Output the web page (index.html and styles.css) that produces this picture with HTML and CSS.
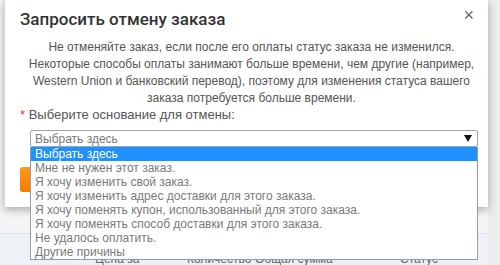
FILE: index.html
```html
<!DOCTYPE html>
<html lang="ru">
<head>
  <meta charset="UTF-8" />
  <title>Запросить отмену заказа</title>
  <link rel="stylesheet" href="styles.css">
</head>
<body>
  <div class="page">
    <div class="page-top"></div>
    <div class="order-head">
      <span class="col-price">Цена за единицу</span>
      <span class="col-qty">Количество</span>
      <span class="col-sum">Общая сумма</span>
      <span class="col-status">Статус</span>
    </div>
  </div>

  <div class="modal">
    <div class="modal-header">
      <h2>Запросить отмену заказа</h2>
      <span class="close">&times;</span>
    </div>
    <div class="modal-body">
      <p class="notice">
        Не отменяйте заказ, если после его оплаты статус заказа не изменился.<br>
        Некоторые способы оплаты занимают больше времени, чем другие (например,<br>
        Western Union и банковский перевод), поэтому для изменения статуса вашего<br>
        заказа потребуется больше времени.
      </p>
      <div class="field-label"><span class="req">*</span> Выберите основание для отмены:</div>
      <div class="select-wrap">
        <div class="select-box">
          <span>Выбрать здесь</span>
          <span class="arrow"></span>
        </div>
        <ul class="options">
          <li class="active">Выбрать здесь</li>
          <li>Мне не нужен этот заказ.</li>
          <li>Я хочу изменить свой заказ.</li>
          <li>Я хочу изменить адрес доставки для этого заказа.</li>
          <li>Я хочу поменять купон, использованный для этого заказа.</li>
          <li>Я хочу поменять способ доставки для этого заказа.</li>
          <li>Не удалось оплатить.</li>
          <li>Другие причины</li>
        </ul>
      </div>
      <button class="btn-submit">Отправить</button>
    </div>
  </div>
</body>
</html>
```

FILE: styles.css
```css
* {
  box-sizing: border-box;
}

body {
  margin: 0;
  background: #ececec;
  font-family: "Liberation Sans", Arial, sans-serif;
  overflow: hidden;
}

.page {
  margin-right: 12px;
  background: #f5f5f5;
}

.page-top {
  height: 233px;
}

.order-head {
  display: flex;
  height: 40px;
  padding: 18px 0 0 95px;
  border-top: 1px solid #dfe4ea;
  background: #eef2f7;
  font-size: 12px;
  color: #666;
}

.col-price { width: 92px; }
.col-qty { width: 68px; }
.col-sum { width: 145px; }

.modal {
  position: absolute;
  left: 4px;
  top: 0;
  width: 484px;
  height: 207px;
  background: #fff;
  border-left: 1px solid #d6d6d6;
  box-shadow: 0 3px 8px rgba(0,0,0,0.3);
}

.modal-header {
  display: flex;
  justify-content: space-between;
  align-items: flex-start;
  padding: 7px 14px 0 15px;
}

.modal-header h2 {
  margin: 0;
  font-family: Roboto, "Liberation Sans", sans-serif;
  font-size: 17px;
  line-height: 24px;
  font-weight: 500;
  color: #333;
}

.close {
  margin-top: -1px;
  font-size: 18px;
  color: #666;
  line-height: 18px;
}

.modal-body {
  padding: 8px 10px 0 15px;
}

.notice {
  margin: 0;
  padding-left: 5px;
  text-align: center;
  font-size: 12px;
  line-height: 17px;
  color: #555;
}

.field-label {
  font-size: 13px;
  line-height: 16px;
  color: #555;
}

.req {
  color: #d33;
}

.select-wrap {
  position: relative;
  margin: 7px 0 0 10px;
}

.select-box {
  display: flex;
  justify-content: space-between;
  align-items: center;
  height: 17px;
  padding: 0 5px 0 4px;
  border: 1px solid #a5a5a5;
  border-radius: 2px;
  background: #fff;
  font-size: 12px;
  color: #7a7a7a;
}

.arrow {
  width: 0;
  height: 0;
  border-left: 4px solid transparent;
  border-right: 4px solid transparent;
  border-top: 7px solid #111;
}

.options {
  position: absolute;
  top: 100%;
  left: 0;
  right: 0;
  margin: 0;
  padding: 0;
  list-style: none;
  background: #fff;
  border: 1px solid #8f9db0;
  border-top: none;
  z-index: 2;
}

.options li {
  height: 14px;
  padding-left: 4px;
  font-size: 12px;
  line-height: 14px;
  color: #7a7a7a;
  white-space: nowrap;
}

.options li.active {
  background: #1e90ff;
  color: #fff;
}

.btn-submit {
  margin-top: 20px;
  width: 90px;
  height: 25px;
  border: none;
  border-radius: 3px;
  background: linear-gradient(to bottom, #ff9a1e, #f57b00);
  color: #fff;
  font-size: 13px;
}
```
